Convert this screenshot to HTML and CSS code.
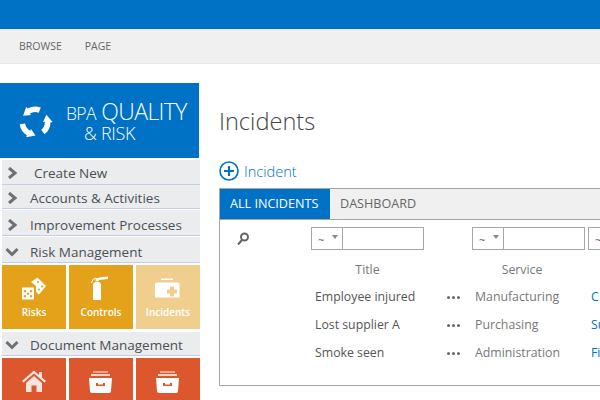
FILE: index.html
```html
<!DOCTYPE html>
<html>
<head>
  <title>Incidents</title>
  <link rel="stylesheet" href="styles.css">
</head>
<body>
  <div class="topbar"></div>
  <div class="ribbon">
    <span>BROWSE</span>
    <span>PAGE</span>
  </div>

  <div class="page">
    <div class="sidebar">
      <div class="logo">
        <svg class="logo-icon" viewBox="0 0 38 38">
          <path id="arrow" d="M24.800 4.600 A15.500 15.500 0 0 0 11.600 5.400 L10.200 3.800 L7.100 12.700 L15 12.100 L13.800 10.600 A10 10 0 0 1 22.700 9.700 Z" fill="#fff"/>
          <use href="#arrow" transform="rotate(120 19 19)"/>
          <use href="#arrow" transform="rotate(240 19 19)"/>
        </svg>
        <div class="logo-text">
          <div class="logo-line1"><span class="small">BPA</span> QUALITY</div>
          <div class="logo-line2">&amp; RISK</div>
        </div>
      </div>

      <div class="nav-row create"><span class="chev"><svg viewBox="0 0 12 12"><path d="M3 1 L9 6 L3 11" /></svg></span><span>Create New</span></div>
      <div class="nav-row accounts"><span class="chev"><svg viewBox="0 0 12 12"><path d="M3 1 L9 6 L3 11" /></svg></span><span>Accounts &amp; Activities</span></div>
      <div class="nav-row tall"><span class="chev"><svg viewBox="0 0 12 12"><path d="M3 1 L9 6 L3 11" /></svg></span><span>Improvement Processes</span></div>
      <div class="nav-row tall"><span class="chev"><svg class="down" viewBox="0 0 14 12"><path d="M1.500 3 L7 8.500 L12.500 3" /></svg></span><span>Risk Management</span></div>

      <div class="tiles">
        <div class="tile gold">
          <svg viewBox="0 0 26 24">
            <path d="M1 10.500 H13 V22.500 H1 Z M4 13 a1.200 1.200 0 1 0 .01 0 M10 13 a1.200 1.200 0 1 0 .01 0 M7 15.500 a1.200 1.200 0 1 0 .01 0 M4 18 a1.200 1.200 0 1 0 .01 0 M10 18 a1.200 1.200 0 1 0 .01 0" fill="#fff" fill-rule="evenodd"/>
            <path d="M15 9 L10 5 L16.500 .5 L25 9 L18 17.500 L15 15 V9 Z M17 4 a1 1 0 1 0 .01 0 M21 8.500 a1 1 0 1 0 .01 0 M18 11.500 a1 1 0 1 0 .01 0" fill="#fff" fill-rule="evenodd"/>
          </svg>
          <span>Risks</span>
        </div>
        <div class="tile gold">
          <svg viewBox="0 0 26 26">
            <path d="M5 9 Q5 6 9 5.500 Q13 6 13 9 V24 H5 Z" fill="#fff"/>
            <path d="M7.500 5 V2 H11 V1.500 L20 .5 V3 L11 4 V5 Z" fill="#fff"/>
            <path d="M7.500 2 Q4 3 3.500 7" fill="none" stroke="#fff"/>
          </svg>
          <span>Controls</span>
        </div>
        <div class="tile gold faded">
          <svg viewBox="0 0 26 24">
            <path d="M6 1.500 H18 V3 H6 Z" fill="#fff"/>
            <path d="M2 5.500 Q0 5.500 0 7.500 V20.500 H24.500 V7.500 Q24.500 5.500 22.500 5.500 Z" fill="#fff"/>
            <path d="M15 9.500 H19 V12.500 H22 V16.500 H19 V19.500 H15 V16.500 H12 V12.500 H15 Z" fill="#f0cf8e"/>
          </svg>
          <span>Incidents</span>
        </div>
      </div>

      <div class="nav-row doc"><span class="chev"><svg class="down" viewBox="0 0 14 12"><path d="M1.500 3 L7 8.500 L12.500 3" /></svg></span><span>Document Management</span></div>

      <div class="tiles">
        <div class="tile red">
          <svg viewBox="0 1 26 24">
            <path d="M1 12 L13 1.500 L18 6 V3 H21 V8.500 L25 12 L23.500 13.500 L13 4.500 L2.500 13.500 Z" fill="#f7e4de"/>
            <path d="M5 14 L13 7 L21 14 V23 H15.500 V16.500 H10.500 V23 H5 Z" fill="#f7e4de"/>
          </svg>
        </div>
        <div class="tile red">
          <svg viewBox="0 0 26 24">
            <use href="#drawer"/>
          </svg>
        </div>
        <div class="tile red">
          <svg viewBox="0 0 26 24">
            <g id="drawer">
              <path d="M5 1 H20 V3 H5 Z" fill="#f4a58d"/>
              <path d="M3 4 H22 V6 H3 Z" fill="#fbd5c9"/>
              <path d="M1 8 H24 L23 21 Q23 23 21 23 H4 Q2 23 2 21 Z M8 13 V16 H17 V13 H15 V14.500 H10 V13 Z" fill="#fff" fill-rule="evenodd"/>
            </g>
          </svg>
        </div>
      </div>
    </div>

    <div class="main">
      <h1>Incidents</h1>
      <div class="add-link">
        <svg viewBox="0 0 20 20">
          <circle cx="10" cy="10" r="9" />
          <path d="M10 5 V15 M5 10 H15" />
        </svg>
        <span>Incident</span>
      </div>

      <div class="panel">
        <div class="tabs">
          <div class="tab active">ALL INCIDENTS</div>
          <div class="tab">DASHBOARD</div>
        </div>

        <div class="filters">
          <svg class="search" viewBox="0 0 14 14">
            <circle cx="8.500" cy="5" r="3.500" />
            <path d="M6 8 L2 12.500" />
          </svg>
          <div class="filter"><div class="op">~<i></i></div><input type="text"></div>
          <div class="filter"><div class="op">~<i></i></div><input type="text"></div>
          <div class="filter"><div class="op">~<i></i></div><input type="text"></div>
        </div>

        <div class="heads">
          <div class="head-title">Title</div>
          <div class="head-service">Service</div>
        </div>

        <div class="list-row">
          <div class="c-title">Employee injured</div>
          <div class="c-dots"><b></b><b></b><b></b></div>
          <div class="c-service">Manufacturing</div>
          <div class="c-link">C</div>
        </div>
        <div class="list-row">
          <div class="c-title">Lost supplier A</div>
          <div class="c-dots"><b></b><b></b><b></b></div>
          <div class="c-service">Purchasing</div>
          <div class="c-link">Su</div>
        </div>
        <div class="list-row">
          <div class="c-title">Smoke seen</div>
          <div class="c-dots"><b></b><b></b><b></b></div>
          <div class="c-service">Administration</div>
          <div class="c-link">Fi</div>
        </div>
      </div>
    </div>
  </div>
</body>
</html>
```

FILE: styles.css
```css
:root {
  --blue: #0072c6;
  --text: #444444;
  --soft: #777777;
  --line: #a6a6a6;
  --nav-bg: #ebecee;
  --nav-line: #c9c9ec;
}

html, body {
  height: 400px;
  overflow: hidden;
}

body {
  margin: 0;
  font-family: "Open Sans", "Noto Sans", sans-serif;
  color: var(--text);
  background-color: #ffffff;
}

.topbar {
  height: 29px;
  background-color: var(--blue);
}

.ribbon {
  height: 34px;
  display: flex;
  align-items: center;
  gap: 23px;
  padding-left: 19px;
  background-color: #f0f0f0;
  border-bottom: 1px solid #e8e8e8;
  font-size: 10.5px;
  color: #666666;
}

.page {
  display: flex;
  padding-top: 19px;
}

.sidebar {
  width: 200px;
  flex-shrink: 0;
}

.logo {
  width: 199px;
  height: 75px;
  margin-bottom: 2px;
  display: flex;
  align-items: center;
  background-color: var(--blue);
  color: #ffffff;
}

.logo-icon {
  width: 38px;
  height: 38px;
  margin: 2px 12px 0 16px;
  flex-shrink: 0;
}

.logo-text {
  font-weight: 300;
}

.logo-line1 {
  font-size: 23px;
  line-height: 22px;
  letter-spacing: -0.6px;
  white-space: nowrap;
}

.logo-line1 .small {
  font-size: 17.5px;
}

.logo-line2 {
  padding-left: 18px;
  font-size: 18px;
  line-height: 18px;
  letter-spacing: -0.3px;
}

.nav-row {
  height: 26px;
  margin-left: 2px;
  margin-bottom: 1px;
  padding-top: 2px;
  display: flex;
  align-items: center;
  background-color: var(--nav-bg);
  border-bottom: 1px solid var(--nav-line);
  box-sizing: border-box;
  font-size: 13.5px;
  color: #4a4f55;
}

.nav-row.tall {
  padding-top: 4px;
}

.nav-row.create {
  height: 25px;
  margin-bottom: 0;
}

.nav-row.accounts,
.nav-row.doc {
  height: 24px;
}

.chev {
  width: 28px;
  display: flex;
  padding-left: 4px;
  box-sizing: border-box;
}

.chev svg {
  width: 12px;
  height: 12px;
  fill: none;
  stroke: #707070;
  stroke-width: 3;
}

.chev svg.down {
  width: 14px;
  margin-left: -1px;
}

.create span:last-child {
  padding-left: 4px;
}

.tiles {
  display: flex;
  gap: 3px;
  margin: 2px 0 3px 2px;
}

.tile {
  width: 64px;
  height: 64px;
  display: flex;
  flex-direction: column;
  align-items: center;
  color: #ffffff;
  font-size: 10px;
  font-weight: 600;
}

.tile svg {
  width: 26px;
  height: 26px;
  margin-top: 11px;
  margin-bottom: 3px;
}

.gold {
  background-color: #e3a21a;
}

.gold.faded {
  background-color: #f0cf8e;
}

.red {
  background-color: #dc572e;
}

.main {
  flex-grow: 1;
  padding-left: 19px;
  min-width: 381px;
  box-sizing: border-box;
}

h1 {
  margin: 0;
  height: 78px;
  padding-top: 20px;
  box-sizing: border-box;
  font-size: 23.6px;
  line-height: 36px;
  font-weight: 300;
  color: #444444;
}

.add-link {
  height: 27px;
  display: flex;
  align-items: flex-start;
  gap: 5px;
  font-size: 14.6px;
  font-weight: 300;
  line-height: 20px;
  color: var(--blue);
}

.add-link svg {
  width: 20px;
  height: 20px;
  fill: none;
  stroke: var(--blue);
  stroke-width: 1.600;
}

.add-link path {
  stroke-width: 2.200;
}

.panel {
  width: 400px;
  height: 198px;
  box-sizing: border-box;
  border: 1px solid var(--line);
  font-size: 12.3px;
}

.tabs {
  display: flex;
  height: 30px;
  background-color: #f0f0f0;
  border-bottom: 1px solid var(--line);
  font-size: 12.6px;
}

.tab {
  padding: 0 10px;
  line-height: 30px;
  color: #666666;
}

.tab.active {
  width: 110px;
  box-sizing: border-box;
  background-color: var(--blue);
  color: #ffffff;
}

.filters {
  display: flex;
  align-items: center;
  height: 23px;
  margin-top: 7px;
}

.search {
  width: 14px;
  height: 14px;
  margin: 0 61px 0 16px;
  flex-shrink: 0;
  fill: none;
  stroke: #666666;
  stroke-width: 2;
}

.filter {
  display: flex;
  height: 23px;
  width: 113px;
  flex-shrink: 0;
  margin-right: 48px;
  border: 1px solid var(--line);
  box-sizing: border-box;
}

.filter:last-child {
  margin-left: -45px;
}

.op {
  width: 31px;
  flex-shrink: 0;
  padding-left: 6px;
  box-sizing: border-box;
  border-right: 1px solid var(--line);
  position: relative;
  font-size: 11px;
  line-height: 23px;
  color: #555555;
}

.op i {
  position: absolute;
  right: 4px;
  top: 7px;
  border: 3px solid transparent;
  border-top: 4px solid #888888;
}

.filter input {
  flex-grow: 1;
  min-width: 0;
  border: none;
  padding: 0;
  margin: 0;
  background: transparent;
}

.heads {
  display: flex;
  height: 20px;
  margin-top: 10px;
  line-height: 20px;
  color: var(--soft);
  text-align: center;
}

.head-title {
  width: 113px;
  margin-left: 91px;
}

.head-service {
  width: 100px;
  margin-left: 48px;
}

.list-row {
  display: flex;
  align-items: center;
  height: 28px;
  padding-left: 95px;
  color: #555555;
}

.heads + .list-row {
  margin-top: 2px;
}

.c-title {
  width: 132px;
  white-space: nowrap;
}

.c-dots {
  width: 28px;
  display: flex;
  gap: 2px;
  padding-top: 3px;
}

.c-dots b {
  width: 3px;
  height: 3px;
  border-radius: 50%;
  background-color: #666666;
}

.c-service {
  width: 116px;
  color: var(--soft);
}

.c-link {
  color: var(--blue);
}
```
